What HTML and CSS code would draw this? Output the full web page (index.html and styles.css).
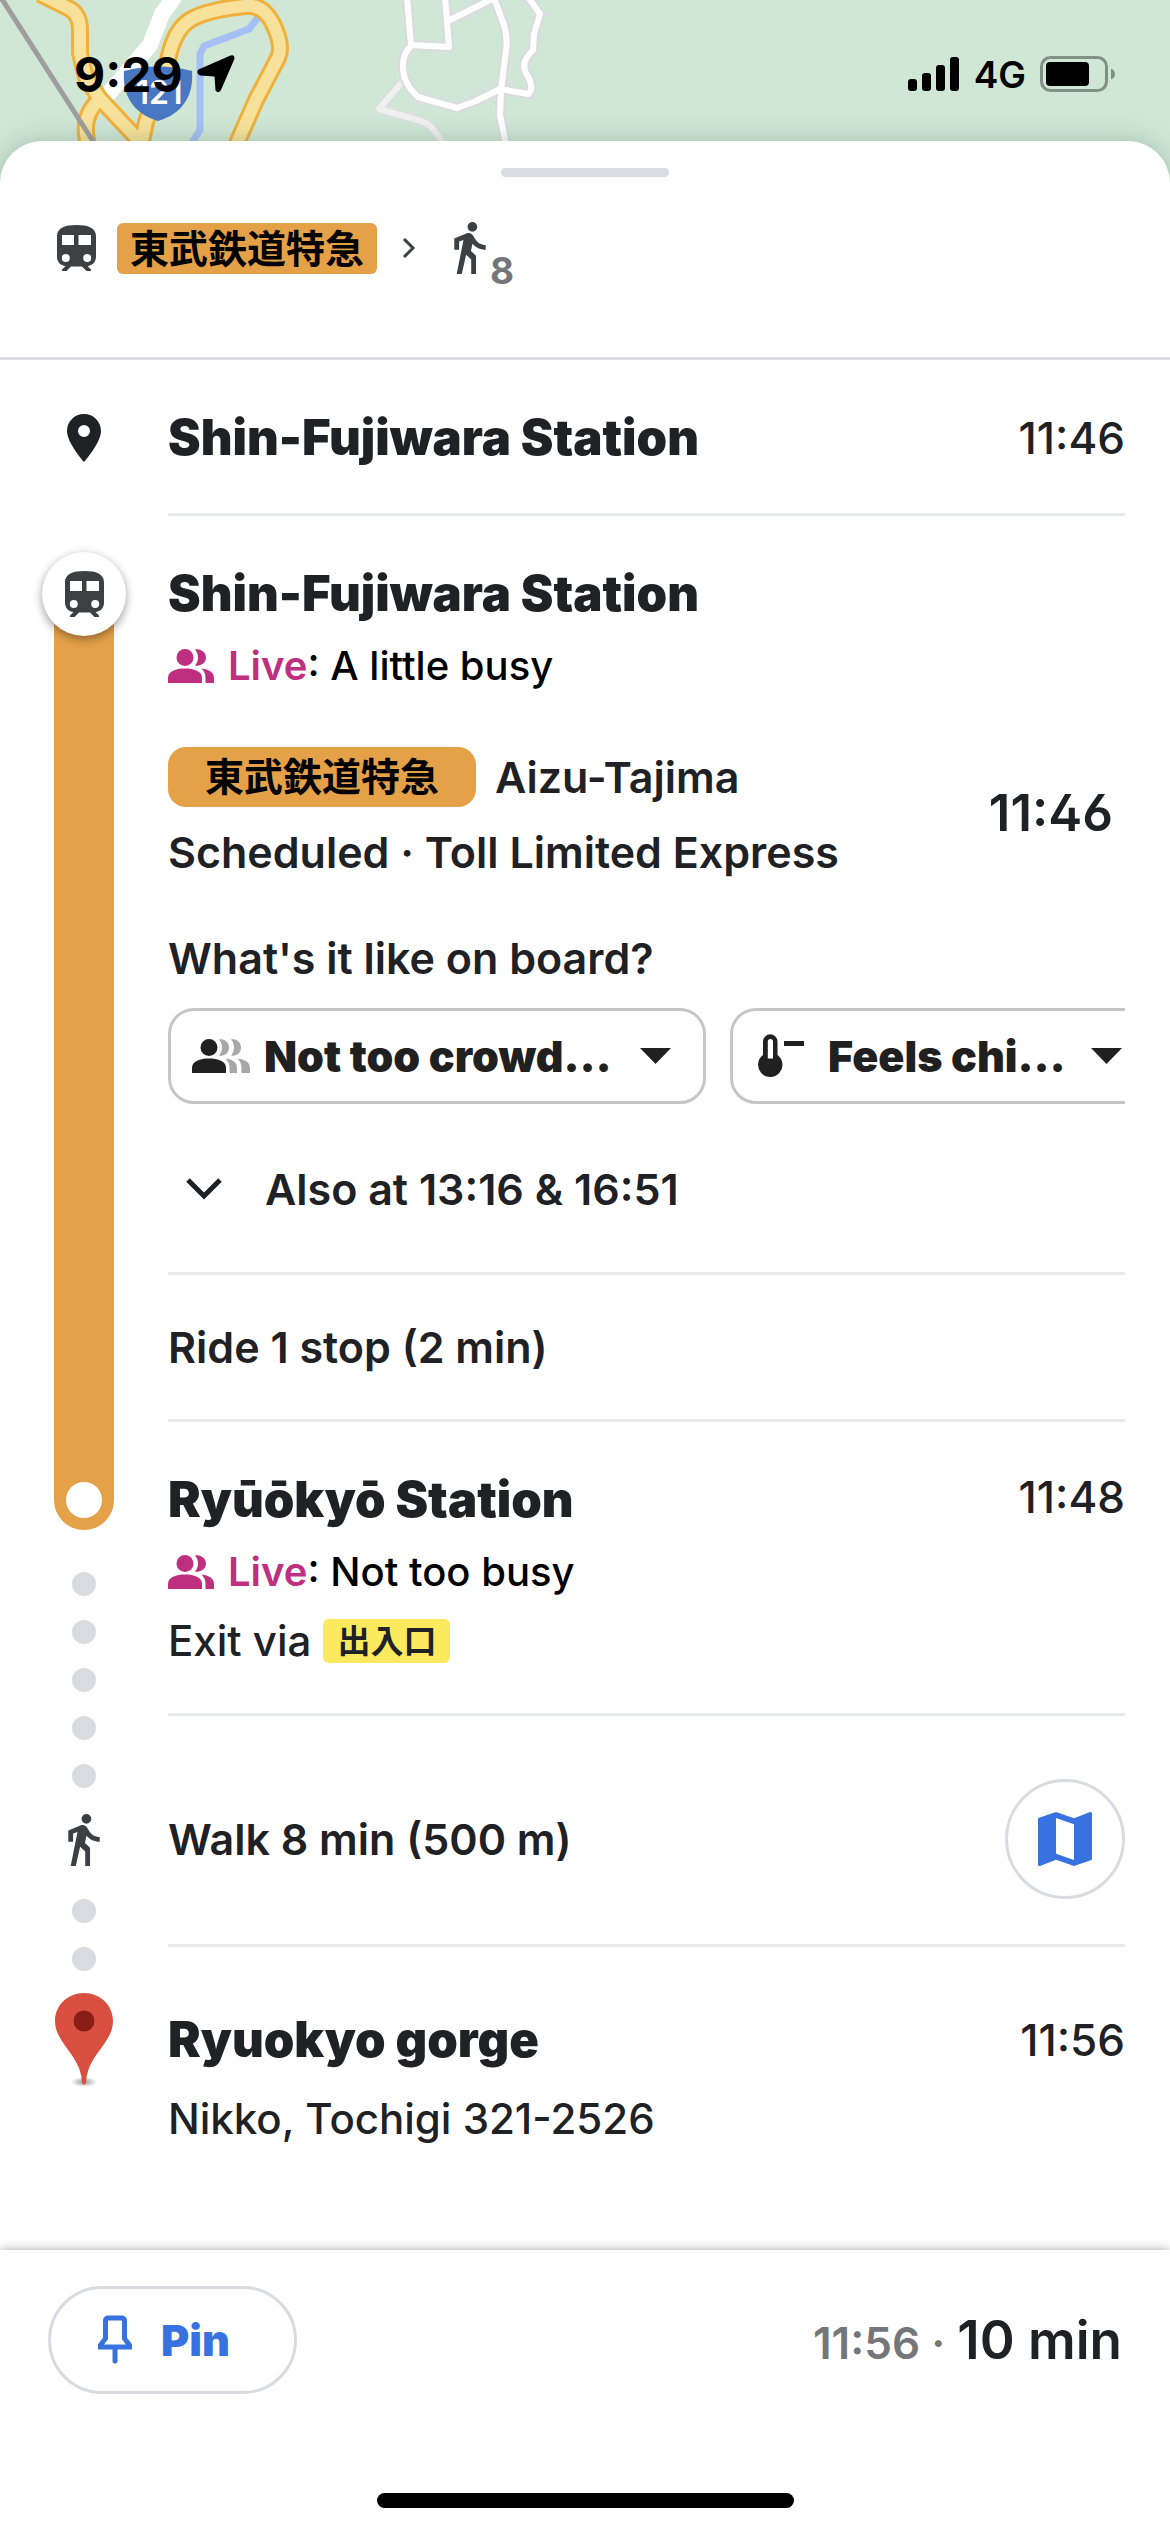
FILE: index.html
```html
<!DOCTYPE html>
<html lang="en">
<head>
<meta charset="utf-8">
<meta name="viewport" content="width=device-width, initial-scale=1">
<title>Trip details</title>
<link rel="stylesheet" href="styles.css">
</head>
<body>
<svg class="sprite" aria-hidden="true">
  <symbol id="train" viewBox="0 0 39 46">
    <path fill-rule="evenodd" d="M0 11C0 3 8 0 19.500 0S39 3 39 11V31.500C39 37 35.500 40.500 30.500 41L34 44.500V46H29.500L25 41.500H14L9.500 46H5V44.500L8.500 41C3.500 40.500 0 37 0 31.500ZM5 10V20H17V10ZM21.500 10V20H34V10ZM8.800 29A4 4 0 1 0 8.800 37A4 4 0 1 0 8.800 29ZM30.200 29A4 4 0 1 0 30.200 37A4 4 0 1 0 30.200 29Z"/>
  </symbol>
  <symbol id="walk" viewBox="6 1.500 13 21.500">
    <path d="M13.500 5.500c1.100 0 2-.9 2-2s-.9-2-2-2-2 .9-2 2 .9 2 2 2zM9.800 8.900L7 23h2.100l1.800-8 2.100 2v6h2v-7.500l-2.100-2 .6-3C14.800 12 16.800 13 19 13v-2c-1.900 0-3.500-1-4.300-2.400l-1-1.600c-.4-.6-1-1-1.700-1-.3 0-.5.1-.8.100L6 8.300V13h2V9.600l1.800-.7"/>
  </symbol>
  <symbol id="people" viewBox="0 0 46 34">
    <circle cx="17" cy="8.500" r="8.500"/>
    <path d="M0 34V29C0 22 8 19.500 17 19.500S34 22 34 29V34Z"/>
    <path d="M27 .6C32-1 38 3 38 8.500S32 18 27 16.400C31 12 31 5 27 .6Z"/>
    <path d="M33.500 19.600C41 20.500 46 23.500 46 29V34H37.500V29C37.500 25 36 22 33.500 19.600Z"/>
  </symbol>
</svg>

<header class="map">
  <svg class="map-art" viewBox="0 0 1170 200" preserveAspectRatio="xMinYMin slice" aria-hidden="true">
    <g fill="none" stroke-linejoin="round">
      <path stroke="#a4c0f6" stroke-width="7" d="M259 16L249 29 204 46 200 54V130L190 146"/>
      <path stroke="#fff" stroke-width="16" d="M175-4L162 14 150 45 104 99"/>
      <path class="road-edge" d="M40-6L70 9Q80 15 80 30V53L86 78 100 99 148 150M100 99Q78 118 90 150M140 150L146 122 168 60Q174 30 190 20T245 6Q262 4 272 22 284 45 278 58L256 100 234 150"/>
      <path class="road-fill" d="M40-6L70 9Q80 15 80 30V53L86 78 100 99 148 150M100 99Q78 118 90 150M140 150L146 122 168 60Q174 30 190 20T245 6Q262 4 272 22 284 45 278 58L256 100 234 150"/>
      <path stroke="#9e9e9e" stroke-width="5" d="M0-4L100 152"/>
      <path stroke="#dcdce1" stroke-width="9" d="M404 80L379 109 424 122Q434 127 442 142"/>
      <path stroke="#f0f0f0" stroke-width="6" d="M404 80L379 109 424 122Q434 127 442 142"/>
      <path class="lane-edge" d="M407-3L411 45 449 47 445-3M448 21L494-2 504 25Q508 38 506 50L501 90 500 115 506 145M411 46Q400 56 404 76 408 88 418 97L457 108 476 101 500 89 528 94Q534 90 529 78 520 66 528 56L533 50 534 34 540 14 528-3"/>
      <path class="lane" d="M407-3L411 45 449 47 445-3M448 21L494-2 504 25Q508 38 506 50L501 90 500 115 506 145M411 46Q400 56 404 76 408 88 418 97L457 108 476 101 500 89 528 94Q534 90 529 78 520 66 528 56L533 50 534 34 540 14 528-3"/>
    </g>
    <path fill="#4a77c1" d="M124 71Q158 62 192 71C194 96 182 114 158 121C134 114 122 96 124 71Z"/>
    <text class="shield" x="159" y="104" text-anchor="middle">121</text>
  </svg>
  <div class="status">
    <div class="status-left">
      <span class="clock">9:29</span>
      <svg width="38" height="38" viewBox="0 0 38 38" aria-hidden="true"><path d="M33.500.6Q38-1 37.400 4L24 35Q21.500 39 18.500 35.500L17.500 21.500 3 20.500Q-1.500 18 1.500 14.500Z"/></svg>
    </div>
    <div class="status-right">
      <svg width="52" height="34" viewBox="0 0 52 34" aria-hidden="true"><rect y="22" width="9" height="12" rx="3"/><rect x="14" y="16" width="9" height="18" rx="3"/><rect x="28" y="8" width="9" height="26" rx="3"/><rect x="42" width="9" height="34" rx="3"/></svg>
      <span class="network">4G</span>
      <svg width="76" height="36" viewBox="0 0 76 36" aria-hidden="true"><rect x="1.500" y="1.500" width="65" height="33" rx="9" fill="none" stroke="#809082" stroke-width="3"/><rect x="6" y="6" width="43" height="24" rx="4"/><path fill="#809082" d="M71 12.500Q75 14 75 18T71 23.500Z"/></svg>
    </div>
  </div>
</header>

<main class="sheet">
  <div class="summary">
    <div class="handle"></div>
    <div class="route">
      <svg class="dark" width="39" height="46" role="img" aria-label="Train"><use href="#train"/></svg>
      <span class="line-tag" lang="ja">東武鉄道特急</span>
      <svg class="route-arrow" width="14" height="20" viewBox="0 0 14 20" aria-hidden="true"><path fill="none" stroke="#3c4043" stroke-width="3" d="M2 1L11 10 2 19"/></svg>
      <svg class="dark" width="32" height="52" role="img" aria-label="Walk"><use href="#walk"/></svg>
      <span class="walk-minutes">8</span>
    </div>
  </div>

  <section class="origin">
    <svg class="origin-icon" width="34" height="48" viewBox="0 0 34 48" aria-hidden="true"><path fill="#202124" fill-rule="evenodd" d="M17 0C7.500 0 0 7.500 0 17C0 29 17 48 17 48S34 29 34 17C34 7.500 26.500 0 17 0ZM17 11A6 6 0 1 1 17 23A6 6 0 1 1 17 11Z"/></svg>
    <div class="row ruled">
      <h2 class="place">Shin-Fujiwara Station</h2>
      <time class="time">11:46</time>
    </div>
  </section>

  <div class="journey">
    <div class="rail" aria-hidden="true">
      <div class="stop-icon"><svg class="dark" width="39" height="46"><use href="#train"/></svg></div>
      <div class="track"><span class="track-end"></span></div>
      <div class="dots dots-before"><i></i><i></i><i></i><i></i><i></i></div>
      <svg class="dark" width="32" height="52"><use href="#walk"/></svg>
      <div class="dots dots-after"><i></i><i></i></div>
      <svg width="58" height="94" viewBox="0 0 58 94">
        <defs><radialGradient id="shade"><stop offset="0" stop-color="#999"/><stop offset="1" stop-color="#999" stop-opacity="0"/></radialGradient></defs>
        <ellipse cx="29" cy="89" rx="13" ry="5" fill="url(#shade)"/>
        <path fill="#d95040" d="M29 0C45 0 58 12 58 28C58 46 42 56 34 75Q31 83 31 90 29 93 27 90 27 83 24 75C16 56 0 46 0 28C0 12 13 0 29 0Z"/>
        <circle cx="29" cy="28" r="10.500" fill="#8a1d15"/>
      </svg>
    </div>

    <div class="steps">
      <section class="step board ruled">
        <h2 class="place">Shin-Fujiwara Station</h2>
        <p class="live"><svg width="46" height="34" aria-hidden="true"><use href="#people"/></svg><span><b>Live</b>: A little busy</span></p>
        <div class="service">
          <div class="service-info">
            <div class="headsign"><span class="line-badge" lang="ja">東武鉄道特急</span><span class="text">Aizu-Tajima</span></div>
            <p class="text">Scheduled · Toll Limited Express</p>
          </div>
          <time class="departure">11:46</time>
        </div>
        <p class="text question">What's it like on board?</p>
        <div class="chips">
          <label class="chip chip-crowd">
            <svg width="58" height="34" viewBox="0 0 58 34" aria-hidden="true"><g fill="#202020"><circle cx="17" cy="8.500" r="8.500"/><path d="M0 34V29C0 22 8 19.500 17 19.500S34 22 34 29V34Z"/></g><g fill="#a8a8a8"><path d="M27 .6C32-1 37 3 37 8.500S32 18 27 16.400C31 12 31 5 27 .6Z"/><path d="M39 .6C44-1 49 3 49 8.500S44 18 39 16.400C43 12 43 5 39 .6Z"/><path d="M33.500 19.600C41 20.500 45 23.500 45 29V34H37.500V29C37.500 25 36 22 33.500 19.600Z"/><path d="M45.500 19.600C53 20.500 58 23.500 58 29V34H49.500V29C49.500 25 48 22 45.500 19.600Z"/></g></svg>
            <select aria-label="Crowding"><option>Not too crowd…</option></select>
            <svg width="31" height="16" viewBox="0 0 31 16" aria-hidden="true"><path fill="#202020" d="M0 0H31L15.500 16Z"/></svg>
          </label>
          <label class="chip chip-temp">
            <svg width="46" height="44" viewBox="0 0 46 44" aria-hidden="true"><path fill="#202020" fill-rule="evenodd" d="M5 7.500A7.200 7.200 0 0 1 19.500 7.500V21A12.200 12.200 0 1 1 5 21ZM9.800 24.500H15V7.500A2.600 2.600 0 0 0 9.800 7.500Z"/><rect x="26" y="7" width="20" height="5" fill="#202020"/></svg>
            <select aria-label="Temperature"><option>Feels chi…</option></select>
            <svg width="31" height="16" viewBox="0 0 31 16" aria-hidden="true"><path fill="#202020" d="M0 0H31L15.500 16Z"/></svg>
          </label>
        </div>
        <button class="also text" type="button"><svg width="38" height="24" viewBox="0 0 38 24" aria-hidden="true"><path fill="none" stroke="#202124" stroke-width="5" d="M3 3L19 19 35 3"/></svg>Also at 13:16 &amp; 16:51</button>
      </section>

      <section class="step ride ruled"><p class="text">Ride 1 stop (2 min)</p></section>

      <section class="step alight ruled">
        <div class="row">
          <h2 class="place">Ryūōkyō Station</h2>
          <time class="time">11:48</time>
        </div>
        <p class="live"><svg width="46" height="34" aria-hidden="true"><use href="#people"/></svg><span><b>Live</b>: Not too busy</span></p>
        <p class="text light exit">Exit via <span class="exit-tag" lang="ja">出入口</span></p>
      </section>

      <section class="step walk row ruled">
        <p class="text">Walk 8 min (500 m)</p>
        <button class="map-button" type="button" aria-label="Show walking map"><svg width="54" height="54" viewBox="3 3 18 18" aria-hidden="true"><path fill="#3872e0" d="M20.500 3l-.16.030L15 5.100 9 3 3.360 4.900c-.21.070-.36.250-.36.480V20.500c0 .28.220.5.500.5l.16-.03L9 18.900l6 2.100 5.640-1.900c.21-.07.360-.25.360-.48V3.500c0-.28-.22-.5-.5-.5zM15 19l-6-2.110V5l6 2.110V19z"/></svg></button>
      </section>

      <section class="step destination">
        <div class="row">
          <h2 class="place">Ryuokyo gorge</h2>
          <time class="time">11:56</time>
        </div>
        <p class="text light address">Nikko, Tochigi 321-2526</p>
      </section>
    </div>
  </div>
</main>

<footer class="footer">
  <div class="actions">
    <button class="pin" type="button"><svg width="36" height="50" viewBox="0 0 36 50" aria-hidden="true"><path fill="none" stroke="#3872e0" stroke-width="5" stroke-linecap="round" d="M18 32V46M8.500 23.500V6Q8.500 3 11.500 3H24.500Q27.500 3 27.500 6V23.500L32.500 30V32H3.500V30Z"/></svg>Pin</button>
    <p class="eta"><span class="arrive">11:56 ·</span> <strong>10 min</strong></p>
  </div>
  <div class="home-bar"></div>
</footer>
</body>
</html>
```
FILE: styles.css
```css
* {
  box-sizing: border-box;
}

body {
  margin: 0;
  min-height: 100vh;
  display: flex;
  flex-direction: column;
  background: #fff;
  color: #202124;
  font-family: Inter, "Noto Sans CJK JP", sans-serif;
  font-size: 43px;
}

h2,
p {
  margin: 0;
}

svg {
  display: block;
  flex: none;
}

button,
select {
  font: inherit;
  color: inherit;
  background: none;
  border: 0;
  padding: 0;
}

.sprite {
  position: absolute;
  width: 0;
  height: 0;
}

.dark {
  fill: #3c4043;
}

/* Map strip and status bar */
.map {
  position: relative;
  height: 200px;
  overflow: hidden;
  background: #d0e7d6;
}

.map-art {
  position: absolute;
  inset: 0;
  width: 100%;
  height: 100%;
}

.road-edge {
  stroke: #efb03c;
  stroke-width: 18px;
}

.road-fill {
  stroke: #f8e29b;
  stroke-width: 12px;
}

.lane-edge {
  stroke: #dadae0;
  stroke-width: 10px;
}

.lane {
  stroke: #fff;
  stroke-width: 6px;
}

.shield {
  fill: #fff;
  font-size: 32px;
  font-weight: 600;
}

.status {
  position: relative;
  display: flex;
  justify-content: space-between;
  align-items: center;
  padding: 44px 54px 0 74px;
  height: 104px;
  color: #000;
}

.status-left,
.status-right {
  display: flex;
  align-items: center;
  gap: 14px;
}

.clock {
  font-size: 48px;
  font-weight: 700;
}

.network {
  font-size: 37px;
  font-weight: 600;
}

/* Sheet */
.sheet {
  position: relative;
  flex: 1;
  margin-top: -59px;
  border-radius: 42px 42px 0 0;
  background: #fff;
  box-shadow: 0 0 24px rgba(60, 90, 70, 0.3);
}

.summary {
  padding: 27px 57px 70px;
  border-bottom: 3px solid #dadbe0;
}

.handle {
  width: 168px;
  height: 9px;
  margin: 0 auto 32px;
  border-radius: 5px;
  background: #dadbe0;
}

.route {
  display: flex;
  align-items: center;
  height: 78px;
}

.line-tag {
  margin: 0 25px 0 21px;
  padding: 0 13px;
  border-radius: 6px;
  background: #e4a148;
  color: #000;
  font-size: 39px;
  font-weight: 700;
  line-height: 51px;
}

.route-arrow {
  margin-right: 38px;
}

.walk-minutes {
  align-self: flex-end;
  margin-left: 4px;
  color: #747679;
  font-size: 37px;
  font-weight: 700;
  line-height: 32px;
}

/* Shared text */
.place {
  font-size: 49px;
  font-weight: 900;
  line-height: 60px;
}

.time {
  font-size: 44px;
  font-weight: 500;
  line-height: 54px;
}

.text {
  font-weight: 600;
  line-height: 54px;
}

.light {
  font-size: 42px;
  font-weight: 500;
}

.row {
  display: flex;
  align-items: center;
  justify-content: space-between;
}

.ruled {
  border-bottom: 3px solid #e8e9ed;
}

.origin {
  display: grid;
  grid-template-columns: 168px 1fr;
  padding-right: 45px;
}

.origin-icon {
  align-self: center;
  justify-self: center;
}

.origin .row {
  padding: 48px 0 45px;
}

/* Journey */
.journey {
  display: grid;
  grid-template-columns: 168px 1fr;
  padding-right: 45px;
}

.rail {
  display: flex;
  flex-direction: column;
  align-items: center;
  padding: 36px 0 59px;
}

.stop-icon {
  position: relative;
  z-index: 1;
  display: grid;
  place-items: center;
  width: 84px;
  height: 84px;
  border-radius: 50%;
  background: #fff;
  box-shadow: 0 3px 10px rgba(0, 0, 0, 0.4);
}

.track {
  flex: 1;
  display: flex;
  align-items: flex-end;
  justify-content: center;
  width: 60px;
  margin-top: -42px;
  padding-bottom: 12px;
  border-radius: 0 0 30px 30px;
  background: #e4a148;
}

.track-end {
  width: 36px;
  height: 36px;
  border-radius: 50%;
  background: #fff;
}

.dots {
  display: grid;
  gap: 24px;
}

.dots i {
  width: 24px;
  height: 24px;
  border-radius: 50%;
  background: #dadbe0;
}

.dots-before {
  margin: 42px 0 26px;
}

.dots-after {
  margin: 33px 0 22px;
}

.steps {
  min-width: 0;
}

.step {
  padding: 48px 0 45px;
}

.step.board {
  padding-bottom: 56px;
}

.live {
  display: flex;
  align-items: center;
  gap: 14px;
  margin-top: 18px;
  color: #000;
  font-size: 40px;
  font-weight: 500;
  line-height: 48px;
}

.live svg {
  fill: #bf2f80;
}

.live b {
  color: #bf2f80;
  font-weight: 600;
}

.service {
  display: flex;
  align-items: center;
  justify-content: space-between;
  margin-top: 57px;
  padding-right: 12px;
}

.headsign {
  display: flex;
  align-items: center;
  gap: 19px;
  margin-bottom: 18px;
}

.line-badge {
  padding: 0 37px;
  border-radius: 18px;
  background: #e4a148;
  color: #000;
  font-size: 39px;
  font-weight: 700;
  line-height: 60px;
}

.departure,
.eta strong {
  font-weight: 600;
  line-height: 60px;
}

.departure {
  font-size: 51px;
  font-feature-settings: "ss01";
}

.eta strong {
  font-size: 53px;
}

.question {
  margin-top: 52px;
}

.chips {
  display: flex;
  gap: 24px;
  margin-top: 23px;
  overflow: hidden;
}

.chip {
  flex: none;
  display: flex;
  align-items: center;
  height: 96px;
  border: 3px solid #c6c6c6;
  border-radius: 26px;
  color: #202020;
  font-weight: 900;
}

.chip-crowd {
  width: 538px;
  gap: 14px;
  padding: 0 32px 0 21px;
}

.chip-temp {
  width: 440px;
  gap: 24px;
  padding: 0 45px 0 25px;
}

.chip select {
  flex: 1;
  min-width: 0;
  appearance: none;
  line-height: 54px;
}

.also {
  display: flex;
  align-items: center;
  gap: 42px;
  margin-top: 58px;
  padding-left: 17px;
}

.ride {
  padding-top: 45px;
}

.alight .row {
  align-items: flex-start;
}

.exit {
  display: flex;
  align-items: center;
  gap: 12px;
  margin-top: 18px;
}

.exit-tag {
  padding: 0 14px;
  border-radius: 6px;
  background: #fbea5e;
  font-size: 33px;
  font-weight: 700;
  line-height: 44px;
}

.walk {
  padding-top: 63px;
}

.map-button {
  display: grid;
  place-items: center;
  width: 120px;
  height: 120px;
  border: 3px solid #dadbe0;
  border-radius: 50%;
}

.destination {
  padding: 63px 0 0;
}

.address {
  margin-top: 22px;
}

/* Footer */
.footer {
  position: relative;
  padding: 36px 48px 24px;
  background: #fff;
  box-shadow: 0 0 10px rgba(0, 0, 0, 0.35);
}

.actions {
  display: flex;
  align-items: center;
  justify-content: space-between;
}

.pin {
  display: flex;
  align-items: center;
  justify-content: center;
  gap: 28px;
  width: 249px;
  height: 108px;
  padding-right: 18px;
  border: 3px solid #dadbe0;
  border-radius: 54px;
  color: #3872e0;
  font-weight: 900;
}

.arrive {
  color: #747679;
  font-size: 44px;
  font-weight: 600;
}

.home-bar {
  width: 417px;
  height: 15px;
  margin: 99px auto 0;
  border-radius: 8px;
  background: #000;
}
```
